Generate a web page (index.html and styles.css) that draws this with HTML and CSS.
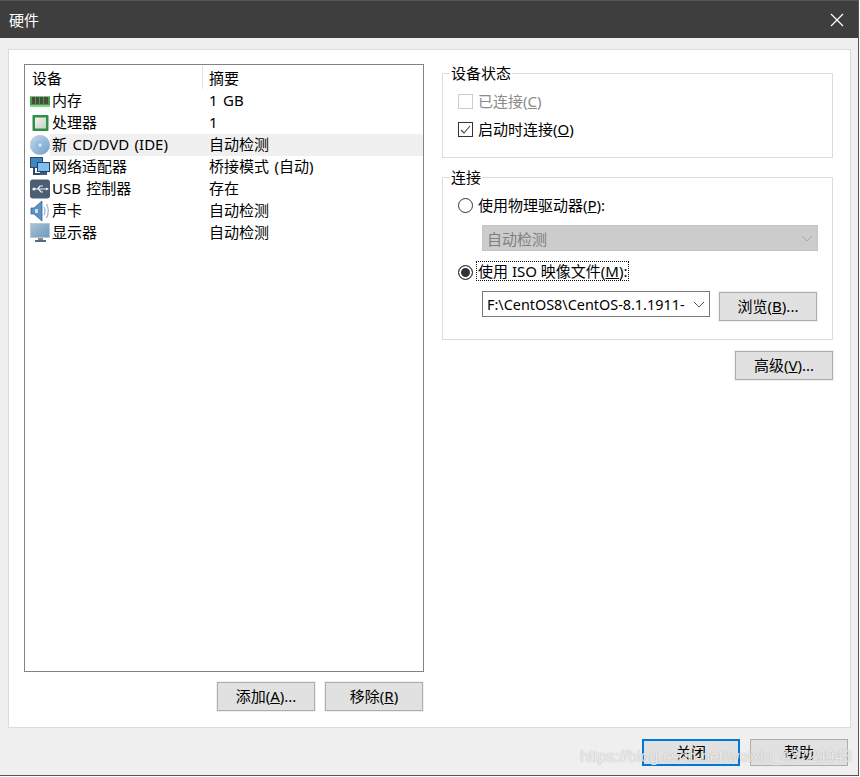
FILE: index.html
```html
<!DOCTYPE html>
<html lang="zh-CN">
<head>
    <meta charset="UTF-8">
    <title>硬件</title>
    <link rel="stylesheet" href="styles.css">
</head>
<body>
    <div class="window">
        <div class="title-bar">
            <span class="title-text">硬件</span>
            <svg class="close-icon" width="14" height="14" viewBox="0 0 14 14"><path d="M1 1L13 13M13 1L1 13" stroke="#fff" stroke-width="1.2" fill="none"/></svg>
        </div>
        <div class="content">
            <div class="panel">
                <div class="left-col">
                    <div class="device-list">
                        <div class="list-head">
                            <span class="head-name">设备</span>
                            <span class="head-summary">摘要</span>
                        </div>
                        <div class="device-row">
                            <svg class="device-icon" width="20" height="20" viewBox="0 0 20 20">
                                <rect x="0" y="5" width="20" height="11" fill="#3f9c50"/>
                                <rect x="0" y="14" width="20" height="2" fill="#8fce8f"/>
                                <rect x="0" y="5" width="20" height="1" fill="#7cc47f"/>
                                <path d="M2 6h3v7H2zM6 6h3v7H6zM10 6h3v7h-3zM14 6h4v7h-4z" fill="#4d4a3c"/>
                            </svg>
                            <span class="device-name">内存</span><span class="device-summary">1 GB</span>
                        </div>
                        <div class="device-row">
                            <svg class="device-icon" width="20" height="20" viewBox="0 0 20 20">
                                <defs><linearGradient id="chip" x1="0" y1="0" x2="1" y2="1"><stop offset="0" stop-color="#f4f4ee"/><stop offset="1" stop-color="#c9cfc4"/></linearGradient></defs>
                                <rect x="2.500" y="2" width="16" height="16" rx="1" fill="#2f8f48"/>
                                <rect x="5" y="4.500" width="11" height="11" fill="url(#chip)"/>
                            </svg>
                            <span class="device-name">处理器</span><span class="device-summary">1</span>
                        </div>
                        <div class="device-row selected">
                            <svg class="device-icon" width="20" height="20" viewBox="0 0 20 20">
                                <defs><linearGradient id="disc" x1="0" y1="0" x2="1" y2="1"><stop offset="0" stop-color="#c4daee"/><stop offset="1" stop-color="#6d9ecb"/></linearGradient></defs>
                                <circle cx="10" cy="10" r="9.800" fill="url(#disc)" stroke="#8fb2d2" stroke-width="0.400"/>
                                <circle cx="10" cy="10" r="3.200" fill="#a9c7e2" stroke="#7fa6ca" stroke-width="0.700"/>
                                <circle cx="10" cy="10" r="1.200" fill="#e4eef7"/>
                            </svg>
                            <span class="device-name">新 CD/DVD (IDE)</span><span class="device-summary">自动检测</span>
                        </div>
                        <div class="device-row">
                            <svg class="device-icon" width="20" height="20" viewBox="0 0 20 20">
                                <rect x="0.500" y="0.500" width="12" height="10" fill="#3f86c6" stroke="#2d4a68"/>
                                <path d="M4 11v6h9" stroke="#2d4a68" stroke-width="2" fill="none"/>
                                <rect x="7.500" y="5.500" width="12" height="9" fill="#7fc0ee" stroke="#25415f"/>
                                <rect x="10" y="15" width="7" height="3" fill="#3f5b79"/>
                            </svg>
                            <span class="device-name">网络适配器</span><span class="device-summary">桥接模式 (自动)</span>
                        </div>
                        <div class="device-row">
                            <svg class="device-icon" width="20" height="20" viewBox="0 0 20 20">
                                <rect x="0" y="0.500" width="20" height="19" rx="3" fill="#4a5e74"/>
                                <path d="M4 10h12M7.500 10l2.500-3h3M8.500 10l2.500 3h2" stroke="#eef2f6" stroke-width="1.200" fill="none"/>
                                <circle cx="4" cy="10" r="1.600" fill="#eef2f6"/>
                                <path d="M16 8.500l3 1.500-3 1.500z" fill="#eef2f6"/>
                            </svg>
                            <span class="device-name">USB 控制器</span><span class="device-summary">存在</span>
                        </div>
                        <div class="device-row">
                            <svg class="device-icon" width="20" height="20" viewBox="0 0 20 20">
                                <path d="M1 7h3l8-7v20l-8-7H1z" fill="#5b93c9" stroke="#34587f" stroke-width="0.700"/>
                                <path d="M5 8h3v4H5z" fill="#c9dff0"/>
                                <path d="M14 6q2 4 0 8M16.500 3q3.500 7 0 14" stroke="#a3bdd6" stroke-width="1.400" fill="none"/>
                            </svg>
                            <span class="device-name">声卡</span><span class="device-summary">自动检测</span>
                        </div>
                        <div class="device-row">
                            <svg class="device-icon" width="20" height="20" viewBox="0 0 20 20">
                                <defs><linearGradient id="screen" x1="0" y1="0" x2="1" y2="1"><stop offset="0" stop-color="#a9c3d8"/><stop offset="1" stop-color="#6f97bb"/></linearGradient></defs>
                                <rect x="0.500" y="0.500" width="19" height="14" fill="url(#screen)" stroke="#b9c8d4"/>
                                <rect x="8" y="15" width="5" height="2" fill="#7d8c99"/>
                                <rect x="5" y="17" width="11" height="2" fill="#4f6c8a"/>
                            </svg>
                            <span class="device-name">显示器</span><span class="device-summary">自动检测</span>
                        </div>
                    </div>
                    <div class="list-buttons">
                        <button class="btn">添加(<u>A</u>)...</button>
                        <button class="btn">移除(<u>R</u>)</button>
                    </div>
                </div>
                <div class="right-col">
                    <fieldset class="group status-group">
                        <legend>设备状态</legend>
                        <div class="option disabled">
                            <span class="check-box"></span>
                            <span class="option-label">已连接(<u>C</u>)</span>
                        </div>
                        <div class="option">
                            <span class="check-box">
                                <svg width="13" height="13" viewBox="0 0 13 13"><path d="M2 7l3 3 6-7" stroke="#444" stroke-width="1.100" fill="none"/></svg>
                            </span>
                            <span class="option-label">启动时连接(<u>O</u>)</span>
                        </div>
                    </fieldset>
                    <fieldset class="group connect-group">
                        <legend>连接</legend>
                        <div class="option">
                            <span class="radio"></span>
                            <span class="option-label">使用物理驱动器(<u>P</u>):</span>
                        </div>
                        <div class="select select-disabled">
                            <span>自动检测</span>
                            <svg width="12" height="7" viewBox="0 0 12 7"><path d="M1 1l5 5 5-5" stroke="#a8a8a8" fill="none"/></svg>
                        </div>
                        <div class="option iso-option">
                            <span class="radio radio-on"></span>
                            <span class="option-label focused">使用 ISO 映像文件(<u>M</u>):</span>
                        </div>
                        <div class="iso-row">
                            <div class="select iso-select">
                                <span>F:\CentOS8\CentOS-8.1.1911-</span>
                                <svg width="12" height="7" viewBox="0 0 12 7"><path d="M1 1l5 5 5-5" stroke="#555" fill="none"/></svg>
                            </div>
                            <button class="btn">浏览(<u>B</u>)...</button>
                        </div>
                    </fieldset>
                    <div class="advanced-row">
                        <button class="btn">高级(<u>V</u>)...</button>
                    </div>
                </div>
            </div>
            <div class="footer">
                <button class="btn btn-default">关闭</button>
                <button class="btn">帮助</button>
            </div>
        </div>
        <div class="watermark">https://blog.csdn.net/weixin_43729943</div>
    </div>
</body>
</html>
```

FILE: styles.css
```css
/* Base */
html, body {
    margin: 0;
    padding: 0;
    height: 100%;
    background-color: #ffffff;
    font-family: "Noto Sans", "Noto Sans CJK SC", sans-serif;
    font-size: 15px;
    color: #000;
}

/* Window */
.window {
    position: relative;
    box-sizing: border-box;
    width: 859px;
    height: 776px;
    display: flex;
    flex-direction: column;
    background-color: #efefef;
    border-right: 1px solid #555;
    border-bottom: 1px solid #555;
    overflow: hidden;
}

.title-bar {
    height: 38px;
    flex: none;
    display: flex;
    align-items: center;
    justify-content: space-between;
    box-sizing: border-box;
    padding: 0 14px 0 9px;
    background-color: #3e3e3e;
    border-top: 1px solid #555;
    color: #fff;
}

.title-text {
    font-size: 15px;
}

.content {
    flex: 1;
    display: flex;
    flex-direction: column;
    padding: 11px 7px 0 8px;
}

/* Main panel */
.panel {
    height: 679px;
    box-sizing: border-box;
    display: flex;
    gap: 18px;
    padding: 14px 17px 16px 15px;
    background-color: #fff;
    border: 1px solid #dcdcdc;
}

.left-col {
    width: 400px;
    flex: none;
    display: flex;
    flex-direction: column;
}

.right-col {
    flex: 1;
    min-width: 0;
}

/* Device list */
.device-list {
    flex: 1;
    box-sizing: border-box;
    border: 1px solid #82828b;
    padding: 0 0 0 5px;
}

.list-head {
    height: 25px;
    display: flex;
    align-items: center;
}

.head-name {
    width: 170px;
    padding-left: 2px;
    height: 23px;
    line-height: 24px;
    border-right: 1px solid #e4e4e4;
}

.head-summary {
    padding-left: 6px;
}

.device-row {
    height: 22px;
    display: flex;
    align-items: center;
    line-height: 20px;
    word-spacing: 1.5px;
}

.device-row.selected {
    background: linear-gradient(to right, #fff 0, #fff 20px, #f0f0f0 20px);
}

.device-icon {
    width: 20px;
    height: 20px;
    flex: none;
    margin-right: 2px;
}

.device-name {
    width: 157px;
    flex: none;
    white-space: nowrap;
    margin-top: -2px;
}

.device-summary {
    white-space: nowrap;
    margin-top: -2px;
}

.list-buttons {
    display: flex;
    justify-content: flex-end;
    gap: 10px;
    padding-top: 10px;
    padding-right: 1px;
}

/* Buttons */
.btn {
    width: 98px;
    height: 29px;
    box-sizing: border-box;
    padding: 0 0 3px;
    background-color: #e1e1e1;
    border: 1px solid #adadad;
    outline: 1px solid #f0f0f0;
    font-family: inherit;
    font-size: 15px;
    color: #000;
}

.btn-default {
    height: 27px;
    border: 2px solid #0078d7;
    outline: none;
}

/* Group boxes */
.group {
    margin: 0 0 9px;
    padding: 0 14px 0 15px;
    border: 1px solid #dcdcdc;
    min-width: 0;
}

.group legend {
    padding: 0 1px;
    margin-left: -8px;
    height: 20px;
    line-height: 20px;
}

.status-group {
    height: 95px;
    box-sizing: border-box;
    margin-top: -1px;
}

.connect-group {
    height: 173px;
    box-sizing: border-box;
    margin-bottom: 11px;
}

.option {
    display: flex;
    align-items: center;
    gap: 5px;
    height: 28px;
}

.option-label {
    margin-top: -2px;
}

.status-group .option:first-of-type {
    margin-top: 4px;
}

.connect-group .option:first-of-type {
    margin-top: 4px;
}

.disabled {
    color: #8a8a8a;
}

.check-box {
    width: 15px;
    height: 15px;
    flex: none;
    box-sizing: border-box;
    border: 1px solid #333;
    display: flex;
    align-items: center;
    justify-content: center;
    background-color: #fff;
}

.disabled .check-box {
    border-color: #ccc;
}

.radio {
    width: 15px;
    height: 15px;
    flex: none;
    box-sizing: border-box;
    border: 1px solid #333;
    border-radius: 50%;
    background-color: #fff;
}

.radio-on {
    background-color: #333;
    box-shadow: inset 0 0 0 2px #fff;
}

.focused {
    outline: 1px dotted #111;
    padding: 0 1px;
    margin-left: -1px;
    line-height: 18px;
}

/* Dropdowns */
.select {
    box-sizing: border-box;
    height: 26px;
    display: flex;
    align-items: center;
    justify-content: space-between;
    padding: 0 4px 0 4px;
    border: 1px solid #7a7a7a;
    background-color: #fff;
    white-space: nowrap;
}

.select-disabled {
    margin: 6px 0 0 24px;
    width: 336px;
    background-color: #ccc;
    border-color: #c4c4c4;
    color: #7f7f7f;
}

.iso-option {
    margin-top: 7px;
}

.iso-row {
    display: flex;
    align-items: flex-start;
    gap: 9px;
    margin: 5px 0 0 24px;
}

.iso-select {
    width: 228px;
    flex: none;
    font-size: 14.4px;
}

.iso-row .btn {
    margin-top: 1px;
}

.advanced-row {
    display: flex;
    justify-content: flex-end;
}

/* Footer */
.footer {
    display: flex;
    justify-content: flex-end;
    align-items: flex-start;
    gap: 10px;
    padding-top: 11px;
    padding-right: 3px;
}

.footer .btn {
    height: 27px;
}

/* Watermark over the corner */
.watermark {
    position: absolute;
    left: 580px;
    top: 748px;
    font-family: "Liberation Sans", sans-serif;
    font-size: 16px;
    color: rgba(255, 255, 255, 0.8);
    text-shadow: 0 0 1px rgba(120, 120, 120, 0.7);
    white-space: nowrap;
}
```
